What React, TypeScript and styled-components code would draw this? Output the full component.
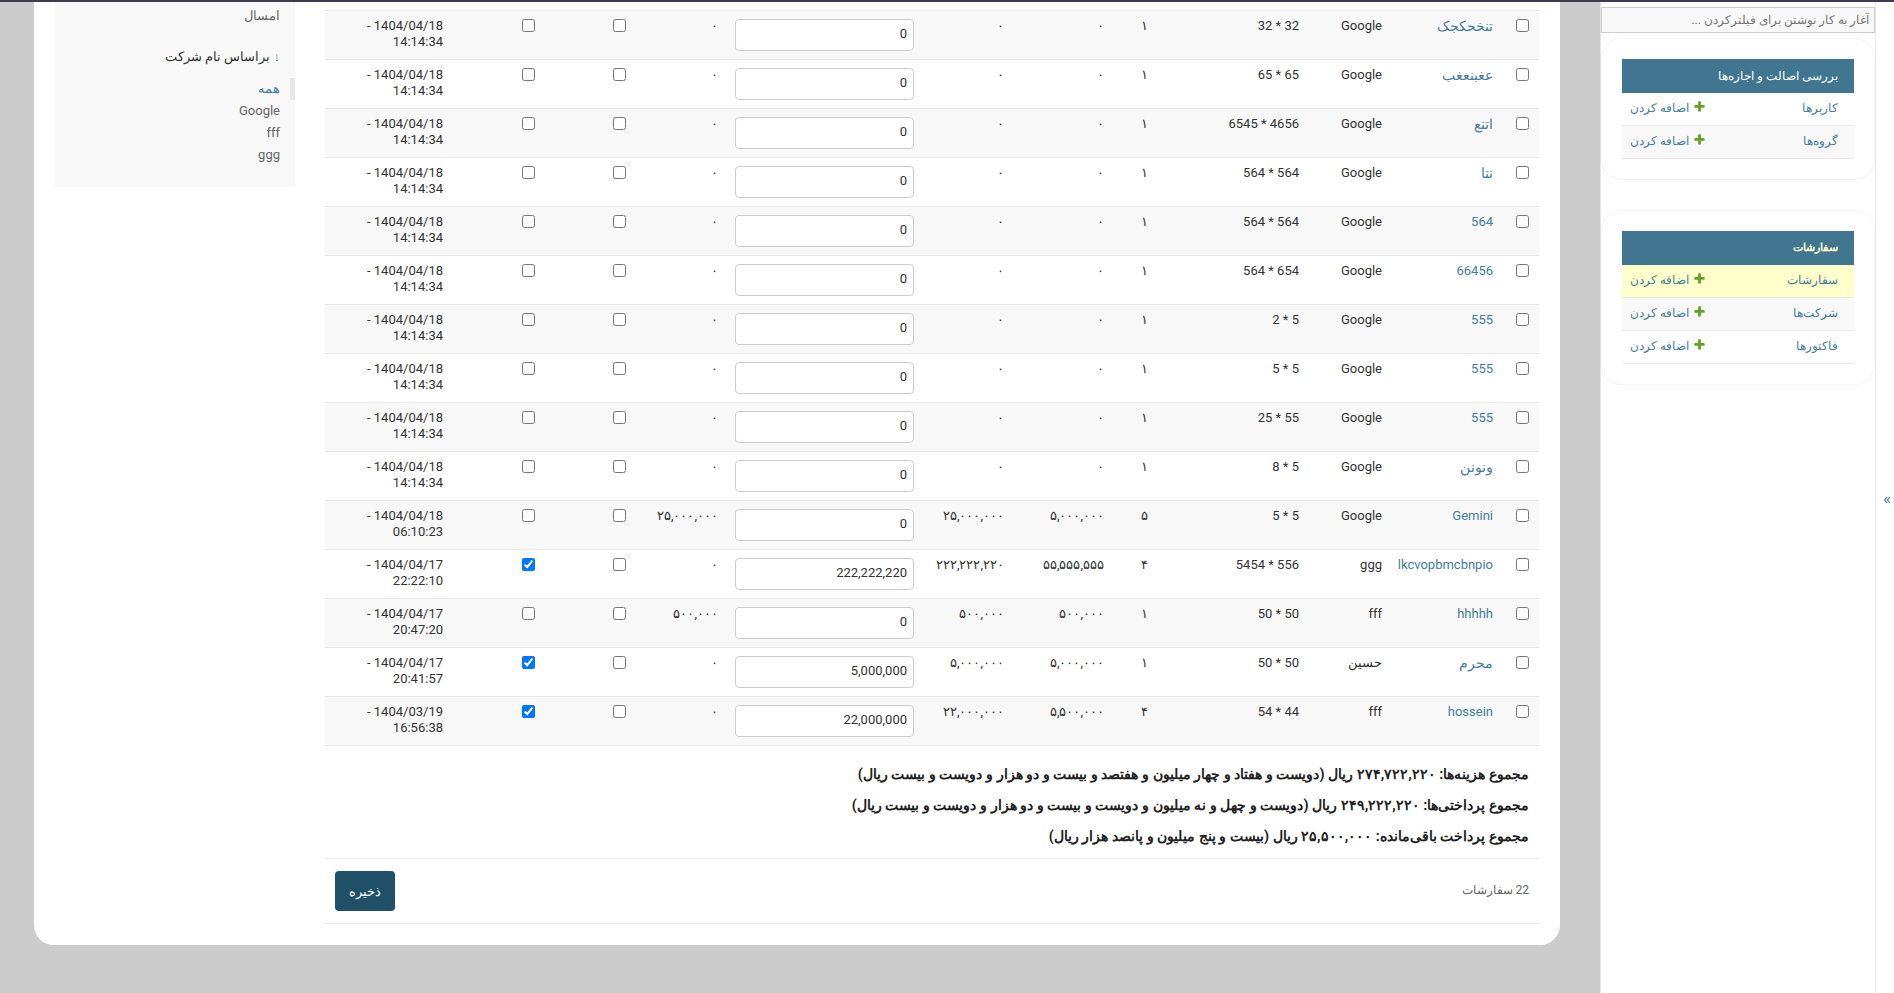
import React from 'react'
import styled, { createGlobalStyle } from 'styled-components'

const LINK = '#447e9b'
const BORDER = '#e8e8e8'
const FONT = 'Roboto, sans-serif'

const GlobalStyle = createGlobalStyle`
  html, body {
    margin: 0;
    padding: 0;
    background: #cccccc;
    color: #333333;
    font-family: ${FONT};
    font-size: 13px;
  }
`

type Order = {
  name: string
  company: string
  size: string
  qty: string
  unit: string
  total: string
  paid: string
  remaining: string
  date: string
  done?: boolean
}

const base = { company: 'Google', qty: '۱', unit: '۰', total: '۰', paid: '0', remaining: '۰', date: '1404/04/18 - 14:14:34' }

const orders: Order[] = [
  { ...base, name: 'تنخحکجک', size: '32 * 32' },
  { ...base, name: 'عغبنعغب', size: '65 * 65' },
  { ...base, name: 'اتنع', size: '4656 * 6545' },
  { ...base, name: 'نتا', size: '564 * 564' },
  { ...base, name: '564', size: '564 * 564' },
  { ...base, name: '66456', size: '654 * 564' },
  { ...base, name: '555', size: '5 * 2' },
  { ...base, name: '555', size: '5 * 5' },
  { ...base, name: '555', size: '55 * 25' },
  { ...base, name: 'ونونن', size: '5 * 8' },
  { ...base, name: 'Gemini', size: '5 * 5', qty: '۵', unit: '۵,۰۰۰,۰۰۰', total: '۲۵,۰۰۰,۰۰۰', remaining: '۲۵,۰۰۰,۰۰۰', date: '1404/04/18 - 06:10:23' },
  { name: 'lkcvopbmcbnpio', company: 'ggg', size: '556 * 5454', qty: '۴', unit: '۵۵,۵۵۵,۵۵۵', total: '۲۲۲,۲۲۲,۲۲۰', paid: '222,222,220', remaining: '۰', date: '1404/04/17 - 22:22:10', done: true },
  { name: 'hhhhh', company: 'fff', size: '50 * 50', qty: '۱', unit: '۵۰۰,۰۰۰', total: '۵۰۰,۰۰۰', paid: '0', remaining: '۵۰۰,۰۰۰', date: '1404/04/17 - 20:47:20' },
  { name: 'محرم', company: 'حسین', size: '50 * 50', qty: '۱', unit: '۵,۰۰۰,۰۰۰', total: '۵,۰۰۰,۰۰۰', paid: '5,000,000', remaining: '۰', date: '1404/04/17 - 20:41:57', done: true },
  { name: 'hossein', company: 'fff', size: '44 * 54', qty: '۴', unit: '۵,۵۰۰,۰۰۰', total: '۲۲,۰۰۰,۰۰۰', paid: '22,000,000', remaining: '۰', date: '1404/03/19 - 16:56:38', done: true },
]

const columnWidths = [36, 111, 83, 151, 44, 100, 90, 196, 92, 91, 92, 128]

const modules = [
  {
    title: 'بررسی اصالت و اجازه‌ها',
    strong: false,
    rows: [{ label: 'کاربرها' }, { label: 'گروه‌ها' }],
  },
  {
    title: 'سفارشات',
    strong: true,
    rows: [{ label: 'سفارشات', current: true }, { label: 'شرکت‌ها' }, { label: 'فاکتورها' }],
  },
]

const isPersian = (s: string) => /[\u0600-\u06ff]/.test(s)

function AddIcon() {
  return (
    <PlusSvg viewBox="0 0 1792 1792" aria-hidden="true">
      <path d="M1600 796v192q0 40-28 68t-68 28h-416v416q0 40-28 68t-68 28h-192q-40 0-68-28t-28-68v-416h-416q-40 0-68-28t-28-68v-192q0-40 28-68t68-28h416v-416q0-40 28-68t68-28h192q40 0 68 28t28 68v416h416q40 0 68 28t28 68z" />
    </PlusSvg>
  )
}

export default function App() {
  return (
    <Page dir="rtl">
      <GlobalStyle />
      <TopBar />
      <Columns>
        <Toggle>»</Toggle>
        <Sidebar>
          <FilterInput placeholder="آغار به کار نوشتن برای فیلترکردن ..." />
          {modules.map((m) => (
            <ModuleCard key={m.title}>
              <ModuleTitle $strong={m.strong}>{m.title}</ModuleTitle>
              {m.rows.map((r, i) => (
                <ModuleRow key={r.label} $odd={i % 2 === 1} $current={'current' in r}>
                  <ModuleLink>{r.label}</ModuleLink>
                  <AddLink>
                    <AddIcon />
                    اضافه کردن
                  </AddLink>
                </ModuleRow>
              ))}
            </ModuleCard>
          ))}
        </Sidebar>
        <Content>
          <Card>
            <ChangeList>
              <Table>
                <colgroup>
                  {columnWidths.map((w, i) => (
                    <Col key={i} $w={w} />
                  ))}
                </colgroup>
                <tbody>
                  {orders.map((o, i) => (
                    <Row key={i} $odd={i % 2 === 0}>
                      <Cell><Check /></Cell>
                      <NameCell><NameLink $persian={isPersian(o.name)}>{o.name}</NameLink></NameCell>
                      <Cell>{o.company}</Cell>
                      <Cell>{o.size}</Cell>
                      <Cell>{o.qty}</Cell>
                      <Cell>{o.unit}</Cell>
                      <Cell>{o.total}</Cell>
                      <InputCell><AmountInput defaultValue={o.paid} /></InputCell>
                      <Cell>{o.remaining}</Cell>
                      <Cell><Check /></Cell>
                      <Cell><Check defaultChecked={o.done} /></Cell>
                      <Cell>{o.date}</Cell>
                    </Row>
                  ))}
                </tbody>
              </Table>
              <Totals>
                <TotalLine>مجموع هزینه‌ها: ۲۷۴,۷۲۲,۲۲۰ ریال (دویست و هفتاد و چهار میلیون و هفتصد و بیست و دو هزار و دویست و بیست ریال)</TotalLine>
                <TotalLine>مجموع پرداختی‌ها: ۲۴۹,۲۲۲,۲۲۰ ریال (دویست و چهل و نه میلیون و دویست و بیست و دو هزار و دویست و بیست ریال)</TotalLine>
                <TotalLine>مجموع پرداخت باقی‌مانده: ۲۵,۵۰۰,۰۰۰ ریال (بیست و پنج میلیون و پانصد هزار ریال)</TotalLine>
              </Totals>
              <Paginator>
                <Count>22 سفارشات</Count>
                <SaveButton type="button">ذخیره</SaveButton>
              </Paginator>
            </ChangeList>
            <FilterPanel>
              <FilterItem>امسال</FilterItem>
              <FilterHeading><Arrow>↓</Arrow> براساس نام شرکت</FilterHeading>
              <FilterItem $selected>همه</FilterItem>
              <FilterItem>Google</FilterItem>
              <FilterItem>fff</FilterItem>
              <FilterItem>ggg</FilterItem>
            </FilterPanel>
          </Card>
        </Content>
      </Columns>
    </Page>
  )
}

const Page = styled.div`
  min-height: 100vh;
  display: flex;
  flex-direction: column;
`

const TopBar = styled.div`
  height: 2px;
  background: #3f3a4e;
`

const Columns = styled.div`
  flex: 1;
  display: flex;
  align-items: stretch;
`

const Toggle = styled.div`
  width: 18px;
  flex: none;
  box-sizing: border-box;
  padding-left: 4px;
  background: #ffffff;
  color: ${LINK};
  font-size: 17px;
  display: flex;
  align-items: center;
  justify-content: center;
`

const Sidebar = styled.aside`
  width: 276px;
  flex: none;
  box-sizing: border-box;
  background: #ffffff;
  border-left: 1px solid #e4e4e4;
  border-right: 1px solid ${BORDER};
  padding-top: 5px;
`

const FilterInput = styled.input`
  display: block;
  box-sizing: border-box;
  width: 100%;
  height: 26px;
  padding: 2px 5px;
  background: #f8f8f8;
  border: 1px solid #cccccc;
  font-family: ${FONT};
  font-size: 12.2px;
  color: #333333;

  &::placeholder {
    color: #777777;
    opacity: 1;
  }
`

const ModuleCard = styled.section`
  margin: 5px 0 30.6px;
  padding: 20px;
  border: 1px solid #f4f4f4;
  border-radius: 20px;
`

const ModuleTitle = styled.div<{ $strong: boolean }>`
  height: 34px;
  line-height: 34px;
  padding: 0 16px;
  background: #417690;
  font-size: ${(p) => (p.$strong ? '11px' : '11.5px')};
  font-weight: ${(p) => (p.$strong ? 700 : 400)};
  color: ${(p) => (p.$strong ? '#ffffcc' : '#ffffff')};
`

const ModuleRow = styled.div<{ $odd: boolean; $current: boolean }>`
  height: 32.8px;
  box-sizing: border-box;
  display: flex;
  align-items: center;
  justify-content: space-between;
  padding: 0 16px 2px 8px;
  background: ${(p) => (p.$current ? '#ffffcc' : p.$odd ? '#f8f8f8' : '#ffffff')};
  border-bottom: 1px solid ${BORDER};
`

const ModuleLink = styled.span`
  color: ${LINK};
  font-size: 11.5px;
`

const AddLink = styled.span`
  display: flex;
  align-items: center;
  gap: 4px;
  color: ${LINK};
  font-size: 12px;
`

const PlusSvg = styled.svg`
  width: 13px;
  height: 13px;
  fill: #5fa225;
  margin-bottom: 3px;
`

const Content = styled.main`
  flex: 1;
  min-width: 0;
  padding: 0 40px 48px 34px;
`

const Card = styled.div`
  display: flex;
  align-items: flex-start;
  gap: 30px;
  background: #ffffff;
  border-radius: 0 0 20px 20px;
  padding: 0 21px 21px 21px;
`

const ChangeList = styled.div`
  width: 1214px;
  flex: none;
  padding-top: 8px;
`

const Table = styled.table`
  width: 1214px;
  table-layout: fixed;
  border-collapse: collapse;
  border-top: 1px solid ${BORDER};
`

const Col = styled.col<{ $w: number }>`
  width: ${(p) => p.$w}px;
`

const Row = styled.tr<{ $odd: boolean }>`
  background: ${(p) => (p.$odd ? '#f8f8f8' : '#ffffff')};
  border-bottom: 1px solid ${BORDER};
`

const Cell = styled.td`
  box-sizing: border-box;
  height: 49px;
  padding: 7px 10px 8px;
  vertical-align: top;
  text-align: right;
  line-height: 16px;
  font-size: 13px;
  color: #333333;
`

const NameCell = styled(Cell)`
  padding-left: 0;
  white-space: nowrap;
`

const InputCell = styled(Cell)`
  padding-left: 7px;
`

const NameLink = styled.a<{ $persian: boolean }>`
  color: ${LINK};
  font-size: ${(p) => (p.$persian ? '14px' : '13px')};
`

const Check = styled.input.attrs({ type: 'checkbox' })`
  display: block;
  width: 13px;
  height: 13px;
  margin: 1px 0 0;
`

const AmountInput = styled.input`
  display: block;
  box-sizing: border-box;
  width: 179px;
  height: 32px;
  margin-top: 1px;
  padding: 3px 6px 7px;
  background: #ffffff;
  border: 1px solid #cccccc;
  border-radius: 4px;
  text-align: right;
  font-family: ${FONT};
  font-size: 13px;
  color: #333333;
`

const Totals = styled.div`
  padding: 13px 10px 6px;
  border-bottom: 1px solid ${BORDER};
`

const TotalLine = styled.p`
  margin: 0;
  height: 31px;
  line-height: 31px;
  font-size: 14.4px;
  font-weight: 700;
  color: #222222;
  white-space: nowrap;
`

const Paginator = styled.div`
  height: 65px;
  box-sizing: border-box;
  display: flex;
  align-items: center;
  justify-content: space-between;
  padding: 0 10px;
  border-bottom: 1px solid ${BORDER};
`

const Count = styled.span`
  color: #666666;
  font-size: 12px;
  padding-bottom: 2px;
`

const SaveButton = styled.button`
  width: 60px;
  height: 40px;
  padding: 0;
  border: none;
  border-radius: 4px;
  background: #205067;
  color: #ffffff;
  font-family: ${FONT};
  font-size: 13px;
`

const FilterPanel = styled.div`
  width: 240px;
  flex: none;
  box-sizing: border-box;
  height: 185px;
  padding-top: 3px;
  background: #f8f8f8;
`

const FilterHeading = styled.h3`
  margin: 19px 15px 10px 0;
  font-size: 12.8px;
  font-weight: 400;
  line-height: 22px;
  color: #333333;
`

const Arrow = styled.span`
  color: ${LINK};
`

const FilterItem = styled.div<{ $selected?: boolean }>`
  height: 22px;
  line-height: 22px;
  padding-right: ${(p) => (p.$selected ? '10px' : '15px')};
  border-right: ${(p) => (p.$selected ? `5px solid ${BORDER}` : 'none')};
  color: ${(p) => (p.$selected ? LINK : '#666666')};
  font-size: 13px;
`
